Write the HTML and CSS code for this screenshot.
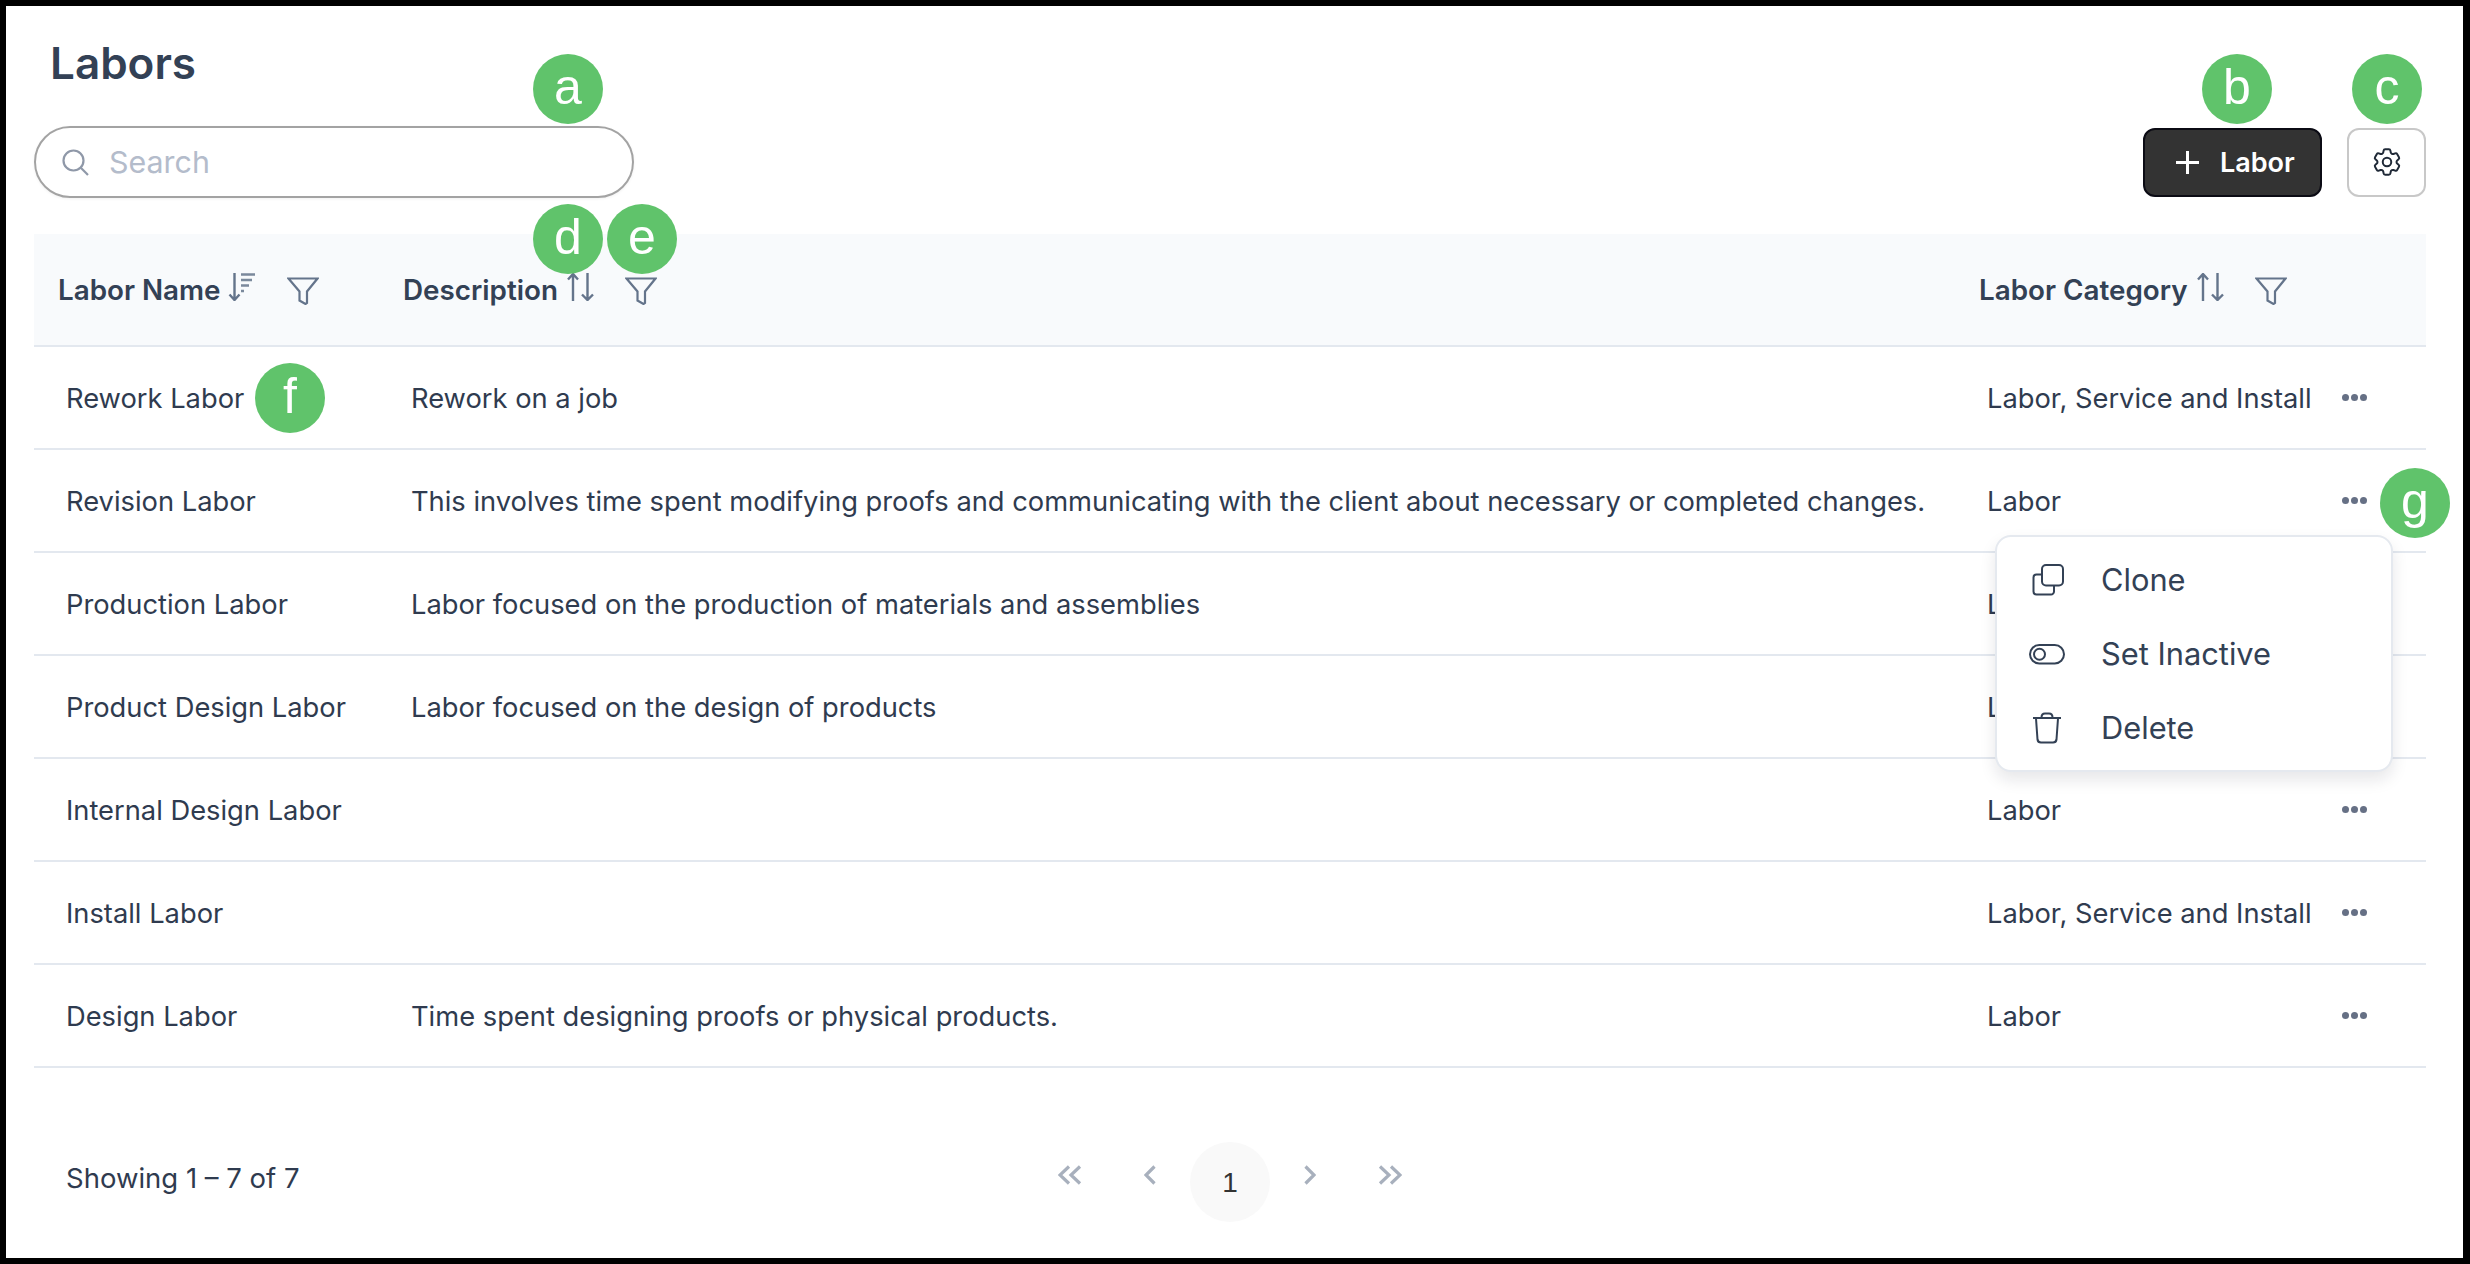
FILE: index.html
```html
<!DOCTYPE html>
<html lang="en">
<head>
<meta charset="utf-8">
<title>Labors</title>
<link rel="stylesheet" href="styles.css">
</head>
<body>
<div class="frame">
  <h1 class="title">Labors</h1>
  <div class="toolbar">
    <label class="search">
      <svg class="search-icon" viewBox="0 0 27 27" width="27" height="27"><circle cx="11.5" cy="11.5" r="10"/><path d="M18.8 18.8 26 26"/></svg>
      <span class="search-text">Search</span>
    </label>
    <div class="actions">
      <button class="btn-primary" type="button">
        <svg class="plus" viewBox="0 0 25 25" width="25" height="25"><path d="M12.5 1v23M1 12.5h23"/></svg>
        <span>Labor</span>
      </button>
      <button class="btn-settings" type="button">
        <svg class="gear" viewBox="0 0 24 24" width="34" height="34"><path d="M9.594 3.94c.09-.542.56-.94 1.11-.94h2.593c.55 0 1.02.398 1.11.94l.213 1.281c.063.374.313.686.645.87.074.04.147.083.22.127.324.196.72.257 1.075.124l1.217-.456a1.125 1.125 0 011.37.49l1.296 2.247a1.125 1.125 0 01-.26 1.431l-1.003.827c-.293.24-.438.613-.431.992a6.759 6.759 0 010 .255c-.007.378.138.75.43.99l1.005.828c.424.35.534.954.26 1.43l-1.298 2.247a1.125 1.125 0 01-1.369.491l-1.217-.456c-.355-.133-.75-.072-1.076.124a6.57 6.57 0 01-.22.128c-.331.183-.581.495-.644.869l-.213 1.28c-.09.543-.56.941-1.11.941h-2.594c-.55 0-1.02-.398-1.11-.94l-.213-1.281c-.062-.374-.312-.686-.644-.87a6.52 6.52 0 01-.22-.127c-.325-.196-.72-.257-1.076-.124l-1.217.456a1.125 1.125 0 01-1.369-.49l-1.297-2.247a1.125 1.125 0 01.26-1.431l1.004-.827c.292-.24.437-.613.43-.992a6.932 6.932 0 010-.255c.007-.378-.138-.75-.43-.99l-1.004-.828a1.125 1.125 0 01-.26-1.43l1.297-2.247a1.125 1.125 0 011.37-.491l1.216.456c.356.133.751.072 1.076-.124.072-.044.146-.087.22-.128.332-.183.582-.495.644-.869l.214-1.281z"/><circle cx="12" cy="12" r="3"/></svg>
      </button>
    </div>
  </div>

  <div class="table">
    <div class="row head">
      <div class="th">
        <span class="th-label">Labor Name</span>
        <svg class="sort sort-name" viewBox="0 0 28 28" width="28" height="28"><path d="M6.5 0v27M1.5 21.5l5 5.5 5-5.5"/><path class="bars" d="M13 1.5h14M13 7h11M13 12.5h8M13 18h3"/></svg>
        <svg class="filter" viewBox="0 0 32 28" width="32" height="28"><path d="M1.5 1.5h29L20 14.500V26l-1.500 1-6-3.500V14.500z"/></svg>
      </div>
      <div class="th">
        <span class="th-label">Description</span>
        <svg class="sort" viewBox="0 0 27 28" width="27" height="28"><path d="M6 28V1M1 6.500 6 1l5 5.500"/><path d="M20.500 0v27M15 21.500l5.500 5.500 5.500-5.500"/></svg>
        <svg class="filter" viewBox="0 0 32 28" width="32" height="28"><path d="M1.5 1.5h29L20 14.500V26l-1.500 1-6-3.500V14.500z"/></svg>
      </div>
      <div class="th">
        <span class="th-label">Labor Category</span>
        <svg class="sort" viewBox="0 0 27 28" width="27" height="28"><path d="M6 28V1M1 6.500 6 1l5 5.500"/><path d="M20.500 0v27M15 21.500l5.500 5.500 5.500-5.500"/></svg>
        <svg class="filter" viewBox="0 0 32 28" width="32" height="28"><path d="M1.5 1.5h29L20 14.500V26l-1.500 1-6-3.500V14.500z"/></svg>
      </div>
      <div></div>
    </div>

    <div class="row body"><div class="td">Rework Labor</div><div class="td">Rework on a job</div><div class="td">Labor, Service and Install</div><div class="dots"><i></i><i></i><i></i></div></div>
    <div class="row body"><div class="td">Revision Labor</div><div class="td">This involves time spent modifying proofs and communicating with the client about necessary or completed changes.</div><div class="td">Labor</div><div class="dots"><i></i><i></i><i></i></div></div>
    <div class="row body"><div class="td">Production Labor</div><div class="td">Labor focused on the production of materials and assemblies</div><div class="td">Labor</div><div class="dots"><i></i><i></i><i></i></div></div>
    <div class="row body"><div class="td">Product Design Labor</div><div class="td">Labor focused on the design of products</div><div class="td">Labor</div><div class="dots"><i></i><i></i><i></i></div></div>
    <div class="row body"><div class="td">Internal Design Labor</div><div class="td"></div><div class="td">Labor</div><div class="dots"><i></i><i></i><i></i></div></div>
    <div class="row body"><div class="td">Install Labor</div><div class="td"></div><div class="td">Labor, Service and Install</div><div class="dots"><i></i><i></i><i></i></div></div>
    <div class="row body"><div class="td">Design Labor</div><div class="td">Time spent designing proofs or physical products.</div><div class="td">Labor</div><div class="dots"><i></i><i></i><i></i></div></div>
  </div>

  <div class="footer">
    <div class="showing">Showing 1 – 7 of 7</div>
    <div class="pager">
      <span class="page-arrow"><svg viewBox="0 0 24 20" width="24" height="20"><path d="M11 1.500 2 10l9 8.500M22 1.500 13 10l9 8.500"/></svg></span>
      <span class="page-arrow"><svg viewBox="0 0 12 20" width="12" height="20"><path d="M10.500 1.500 2 10l8.500 8.500"/></svg></span>
      <span class="page-current">1</span>
      <span class="page-arrow"><svg viewBox="0 0 12 20" width="12" height="20"><path d="M1.500 1.500 10 10l-8.500 8.500"/></svg></span>
      <span class="page-arrow"><svg viewBox="0 0 24 20" width="24" height="20"><path d="M2 1.500 11 10l-9 8.500M13 1.500 22 10l-9 8.500"/></svg></span>
    </div>
    <div></div>
  </div>

  <div class="menu">
    <div class="menu-item">
      <svg class="menu-icon" viewBox="0 0 36 32" width="36" height="32"><rect x="13" y="1" width="21" height="20.500" rx="4"/><path d="M13 10.500H7.500a3 3 0 0 0-3 3V27.500a3 3 0 0 0 3 3H22a3 3 0 0 0 3-3V22"/></svg>
      <span>Clone</span>
    </div>
    <div class="menu-item">
      <svg class="menu-icon" viewBox="0 0 36 32" width="36" height="32"><rect x="1" y="7" width="34" height="18.500" rx="9.250"/><circle cx="10.500" cy="16.250" r="5.500"/></svg>
      <span>Set Inactive</span>
    </div>
    <div class="menu-item">
      <svg class="menu-icon" viewBox="0 0 36 32" width="36" height="32"><path d="M4 6h28M7 6.500l1.500 21a3.500 3.500 0 0 0 3.500 3h12a3.500 3.500 0 0 0 3.500-3l1.500-21M12.500 5.500c0-2.500 1.500-4 3.500-4h4c2 0 3.500 1.500 3.500 4"/></svg>
      <span>Delete</span>
    </div>
  </div>

  <span class="badge badge-a">a</span>
  <span class="badge badge-b">b</span>
  <span class="badge badge-c">c</span>
  <span class="badge badge-d">d</span>
  <span class="badge badge-e">e</span>
  <span class="badge badge-f">f</span>
  <span class="badge badge-g">g</span>
</div>
</body>
</html>
```

FILE: styles.css
```css
* { box-sizing: border-box; }
html, body { margin: 0; padding: 0; height: 100%; background: #000; }
body { font-family: Inter, "Liberation Sans", sans-serif; color: #334155; }

.frame {
  position: relative;
  width: 2470px;
  height: 1264px;
  background: #fff;
  border-style: solid;
  border-color: #000;
  border-width: 6px 7px 6px 6px;
  padding: 32px 37px 0 28px;
  overflow: hidden;
}

.title {
  margin: 0 0 40px 16px;
  height: 48px;
  font-size: 44px;
  line-height: 50px;
  font-weight: 600;
  color: #334155;
}

.toolbar {
  display: flex;
  justify-content: space-between;
  align-items: center;
  height: 72px;
  margin-bottom: 36px;
}

.search {
  display: flex;
  align-items: center;
  width: 600px;
  height: 72px;
  padding-left: 26px;
  gap: 20px;
  border: 2px solid #a3a3a3;
  border-radius: 36px;
  box-shadow: 0 1px 3px rgba(0, 0, 0, .06);
}
.search-icon { fill: none; stroke: #8f98a8; stroke-width: 2.2; }
.search-text { font-size: 30.400px; color: #b4bccb; }

.actions { display: flex; gap: 25px; }

.btn-primary {
  display: flex;
  align-items: center;
  gap: 20px;
  width: 179px;
  height: 69px;
  padding: 0 0 0 30px;
  background: #333;
  border: 2px solid #0b0b14;
  border-radius: 12px;
  color: #fff;
  font: 600 27px Inter, "Liberation Sans", sans-serif;
}
.plus { fill: none; stroke: #fff; stroke-width: 3; }

.btn-settings {
  display: flex;
  align-items: center;
  justify-content: center;
  width: 79px;
  height: 69px;
  padding: 0;
  background: #fff;
  border: 2px solid #c8c8c8;
  border-radius: 12px;
}
.gear { fill: none; stroke: #1f2937; stroke-width: 1.4; }

.row {
  display: grid;
  grid-template-columns: 345px 1576px 1fr 100px;
  align-items: center;
  border-bottom: 2px solid #e3e8ef;
}
.head { height: 113px; background: #f8fafc; }
.body { height: 103px; }

.th {
  display: flex;
  align-items: flex-start;
  align-self: start;
  padding: 39px 0 0 24px;
}
.th-label { font-size: 27.800px; font-weight: 600; line-height: 34px; color: #334155; white-space: nowrap; }
.sort { flex: none; fill: none; stroke: #64748b; stroke-width: 2.4; margin-left: 9px; }
.sort-name { margin-left: 7px; }
.bars { stroke-width: 2.6; opacity: .85; }
.filter { flex: none; fill: none; stroke: #64748b; stroke-width: 2.2; margin: 4px 0 0 31px; }

.td { padding: 1px 0 0 32px; font-size: 27.300px; color: #2f3b4f; white-space: nowrap; }

.dots { display: flex; gap: 2px; padding-left: 16px; margin-top: -1px; }
.dots i { display: block; width: 7px; height: 7px; border-radius: 50%; background: #667085; }

.footer {
  display: grid;
  grid-template-columns: 1fr auto 1fr;
  align-items: center;
  margin-top: 74px;
}
.showing { padding: 0 0 8px 32px; font-size: 27.500px; color: #2f3b4f; }
.pager { display: flex; align-items: flex-start; }
.page-arrow { display: flex; justify-content: center; width: 80px; padding-top: 23px; }
.page-arrow svg { fill: none; stroke: #a8b0bd; stroke-width: 3.2; }
.page-current {
  width: 80px;
  height: 80px;
  border-radius: 50%;
  background: #f9f9f9;
  color: #333;
  font: 28px/82px "Liberation Sans", sans-serif;
  text-align: center;
}

.menu {
  position: absolute;
  left: 1989px;
  top: 529px;
  width: 398px;
  height: 237px;
  display: flex;
  flex-direction: column;
  justify-content: center;
  background: #fff;
  border: 2px solid #e5e9ef;
  border-radius: 16px;
  box-shadow: 0 8px 16px rgba(15, 23, 42, .1);
}
.menu-item {
  display: flex;
  align-items: center;
  height: 74px;
  padding-left: 32px;
  gap: 36px;
  font-size: 30.800px;
  color: #334155;
}
.menu-icon { flex: none; fill: none; stroke: #334155; stroke-width: 2; }

.badge {
  position: absolute;
  width: 70px;
  height: 70px;
  border-radius: 50%;
  background: #60c36b;
  color: #fff;
  font: 50px/66px "Liberation Sans", sans-serif;
  text-align: center;
}
.badge-a { left: 527px; top: 48px; }
.badge-b { left: 2196px; top: 48px; }
.badge-c { left: 2346px; top: 48px; }
.badge-d { left: 527px; top: 198px; }
.badge-e { left: 601px; top: 198px; }
.badge-f { left: 249px; top: 357px; }
.badge-g { left: 2374px; top: 462px; }
```
